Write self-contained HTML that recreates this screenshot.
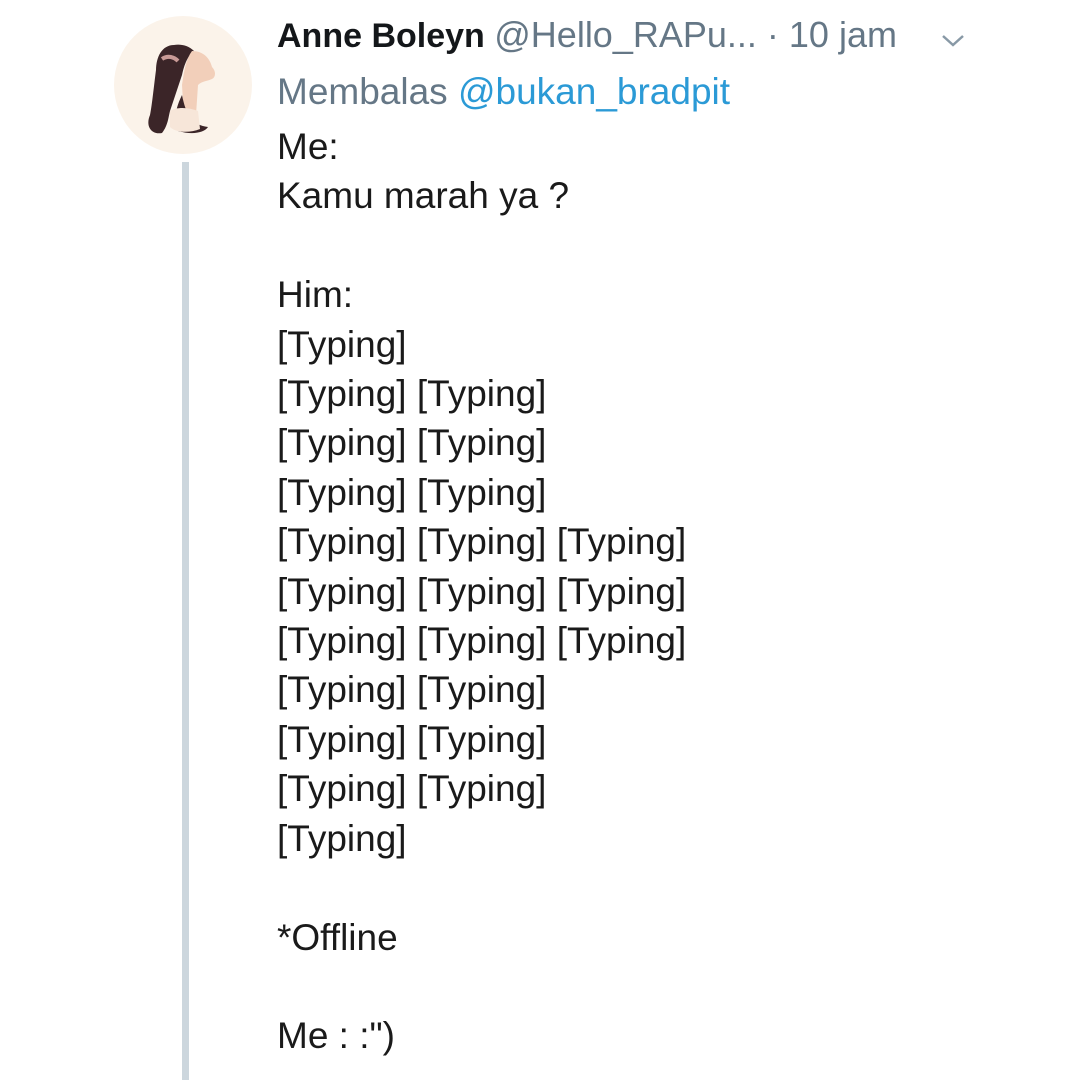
<!DOCTYPE html>
<html><head><meta charset="utf-8"><style>
body{margin:0;width:1080px;height:1080px;background:#fff;overflow:hidden;position:relative;font-family:"Liberation Sans",sans-serif;}
.a{position:absolute;white-space:pre;}
.line{position:absolute;left:182px;top:162px;width:7px;height:918px;background:#ccd6dd;}
.body{position:absolute;left:277px;top:122px;font-size:37px;line-height:49.4px;color:#1a1a1a;white-space:pre;}
</style></head><body>
<svg class="a" style="left:112px;top:15px" width="142" height="142" viewBox="0 0 142 142">
<circle cx="71" cy="70" r="69" fill="#fbf3ea"/>
<path d="M62 30 C50 30 44 42 44 55 C42 70 40 90 38 100 C33 112 40 120 50 118 C56 110 56 104 58 96 L70 60 C72 50 76 40 82 36 C76 30 68 29 62 30Z" fill="#3b2528"/>
<path d="M80 36 C92 36 98 44 100 52 C104 56 104 62 100 64 C96 66 90 66 86 70 L84 100 L72 104 L70 70 C72 56 74 44 80 36Z" fill="#f2cfba"/>
<path d="M70 80 C74 100 80 110 96 112 C92 118 80 120 66 116 C62 108 62 96 70 80Z" fill="#3b2528"/>
<path d="M58 96 C64 92 76 92 86 96 L88 114 C78 118 64 118 58 112Z" fill="#f7e6d9"/>
<path d="M50 44 C56 40 62 42 66 46" stroke="#c99a96" stroke-width="4" fill="none"/>
</svg>
<div class="a" style="left:277px;top:13px;font-size:34px;line-height:44px;color:#14171a;font-weight:bold;">Anne Boleyn <span style="font-weight:normal;color:#657786;font-size:36px">@Hello_RAPu... · 10 jam</span></div>
<svg class="a" style="left:940px;top:32px" width="26" height="18" viewBox="0 0 26 18"><path d="M3 4 L13 13 L23 4" stroke="#8899a6" stroke-width="2.5" fill="none"/></svg>
<div class="a" style="left:277px;top:72px;font-size:37px;line-height:40px;color:#657786;">Membalas <span style="color:#2b9ad6">@bukan_bradpit</span></div>
<div class="line"></div>
<div class="body">Me:
Kamu marah ya ?

Him:
[Typing]
[Typing] [Typing]
[Typing] [Typing]
[Typing] [Typing]
[Typing] [Typing] [Typing]
[Typing] [Typing] [Typing]
[Typing] [Typing] [Typing]
[Typing] [Typing]
[Typing] [Typing]
[Typing] [Typing]
[Typing]

*Offline

Me : :")</div>
</body></html>
